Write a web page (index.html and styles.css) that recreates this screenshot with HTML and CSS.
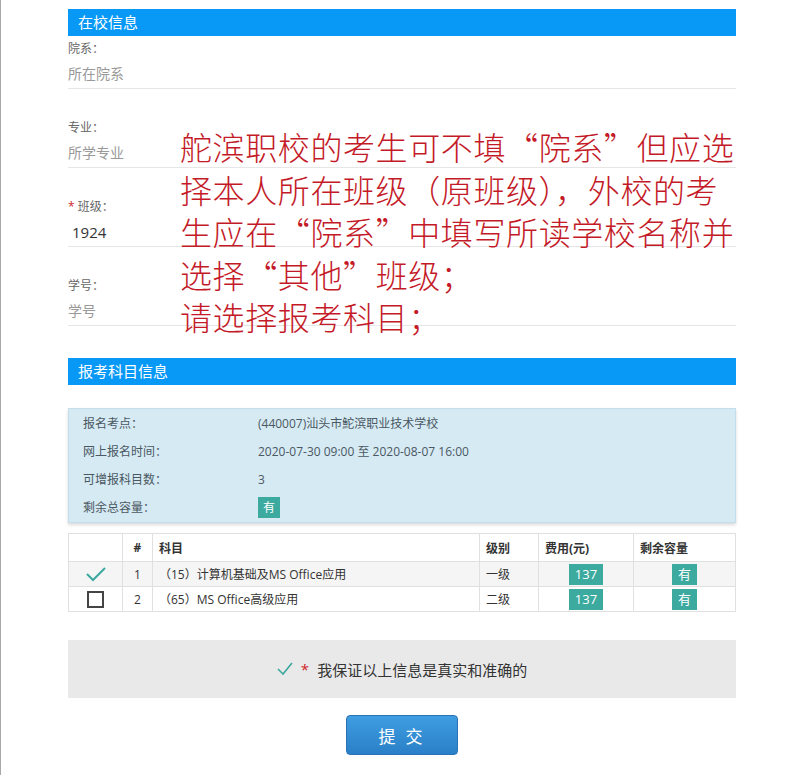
FILE: index.html
```html
<!DOCTYPE html>
<html lang="zh-CN">
<head>
  <meta charset="UTF-8">
  <title>报考信息</title>
  <link rel="stylesheet" href="styles.css">
</head>
<body>
  <div class="page">
    <div class="panel-title">在校信息</div>

    <div class="field">
      <div class="field-label">院系：</div>
      <div class="field-input placeholder">所在院系</div>
    </div>
    <div class="field">
      <div class="field-label">专业：</div>
      <div class="field-input placeholder">所学专业</div>
    </div>
    <div class="field">
      <div class="field-label"><span class="req">*</span> 班级：</div>
      <div class="field-input value">1924</div>
    </div>
    <div class="field">
      <div class="field-label">学号：</div>
      <div class="field-input placeholder">学号</div>
    </div>

    <div class="panel-title second">报考科目信息</div>

    <div class="info-box">
      <div class="info-row"><span class="info-label">报名考点：</span><span>(440007)汕头市鮀滨职业技术学校</span></div>
      <div class="info-row"><span class="info-label">网上报名时间：</span><span>2020-07-30 09:00 至 2020-08-07 16:00</span></div>
      <div class="info-row"><span class="info-label">可增报科目数：</span><span>3</span></div>
      <div class="info-row"><span class="info-label">剩余总容量：</span><span class="badge">有</span></div>
    </div>

    <table class="subjects">
      <thead>
        <tr>
          <th class="c-check"></th>
          <th class="c-num">#</th>
          <th class="c-name">科目</th>
          <th class="c-level">级别</th>
          <th class="c-fee">费用(元)</th>
          <th class="c-cap">剩余容量</th>
        </tr>
      </thead>
      <tbody>
        <tr class="striped">
          <td class="c-check">
            <svg width="20" height="15" viewBox="0 0 20 15"><polyline points="1,7 7,13 19,1" fill="none" stroke="#3ba99f" stroke-width="2"/></svg>
          </td>
          <td class="c-num">1</td>
          <td class="c-name">（15）计算机基础及MS Office应用</td>
          <td class="c-level">一级</td>
          <td class="c-fee"><span class="badge">137</span></td>
          <td class="c-cap"><span class="badge">有</span></td>
        </tr>
        <tr>
          <td class="c-check"><span class="box"></span></td>
          <td class="c-num">2</td>
          <td class="c-name">（65）MS Office高级应用</td>
          <td class="c-level">二级</td>
          <td class="c-fee"><span class="badge">137</span></td>
          <td class="c-cap"><span class="badge">有</span></td>
        </tr>
      </tbody>
    </table>

    <div class="confirm">
      <svg width="16" height="14" viewBox="0 0 16 14"><polyline points="1,7 6,12 15,1" fill="none" stroke="#3ba99f" stroke-width="1.6"/></svg>
      <span class="req">*</span>
      <span>我保证以上信息是真实和准确的</span>
    </div>

    <div class="actions">
      <button class="submit">提 交</button>
    </div>

    <div class="notice">
      舵滨职校的考生可不填<span class="q">“</span>院系<span class="q">”</span>但应选<br>
      择本人所在班级（原班级），外校的考<br>
      生应在<span class="q">“</span>院系<span class="q">”</span>中填写所读学校名称并<br>
      选择<span class="q">“</span>其他<span class="q">”</span>班级；<br>
      请选择报考科目；
    </div>
  </div>
</body>
</html>
```

FILE: styles.css
```css
body {
  margin: 0;
  background: #fff;
  font-family: "Open Sans", "Noto Sans CJK SC", sans-serif;
  color: #333;
}
.page {
  position: relative;
  border-left: 1px solid #a8a8a8;
  min-height: 775px;
  box-sizing: border-box;
  padding: 9px 0 0 67px;
  width: 736px;
}
.panel-title {
  background: #0898f6;
  color: #fff;
  font-size: 15px;
  height: 27px;
  line-height: 27px;
  padding-left: 10px;
}
.panel-title.second {
  margin-top: 32px;
}
.field {
  margin-top: 6px;
  margin-bottom: 32px;
}
.field + .field {
  margin-top: 0;
}
.field-label {
  font-size: 12px;
  line-height: 14px;
  color: #666;
}
.req {
  color: #d0262b;
}
.field-input {
  padding: 10px 0 6px 0;
  line-height: 16px;
  font-size: 14px;
  border-bottom: 1px solid #e6e6e6;
}
.placeholder {
  color: #999;
}
.value {
  color: #333;
  font-size: 15px;
  padding-left: 4px;
}
.info-box {
  margin-top: 23px;
  background: #d6eaf4;
  border: 1px solid #c4dfeb;
  box-shadow: 0 2px 3px rgba(0, 0, 0, 0.15);
  padding: 0 0 1px 14px;
  font-size: 12px;
  color: #4a5862;
}
.info-row {
  display: flex;
  align-items: center;
  height: 28px;
}
.info-label {
  width: 175px;
}
.badge {
  display: inline-block;
  background: #3caa9f;
  color: #fff;
  font-size: 12px;
  line-height: 21px;
  padding: 0 5px;
}
.subjects {
  margin-top: 10px;
  width: 100%;
  border-collapse: collapse;
  font-size: 12px;
  color: #333;
}
.subjects th, .subjects td {
  border: 1px solid #e0e0e0;
  padding: 0 6px;
  text-align: left;
}
.subjects th {
  height: 27px;
  font-weight: bold;
}
.subjects td {
  height: 24px;
}
.subjects tr.striped td {
  background: #f5f5f5;
}
.subjects .c-check {
  width: 41px;
  text-align: center;
}
.subjects .c-check svg {
  display: block;
  margin: 0 auto;
}
.subjects .c-num {
  width: 17px;
  text-align: center;
}
.subjects td.c-num {
  text-align: center;
}
.subjects .c-level {
  width: 46px;
}
.subjects .c-fee {
  width: 82px;
}
.subjects .c-cap {
  width: 89px;
}
.subjects td.c-fee, .subjects td.c-cap {
  text-align: center;
}
.subjects td .badge {
  padding: 0 6px;
  font-size: 13px;
}
.box {
  display: block;
  margin: 0 auto;
  width: 13px;
  height: 13px;
  border: 2px solid #444;
}
.confirm {
  margin-top: 28px;
  height: 58px;
  background: #e9e9e9;
  display: flex;
  align-items: center;
  justify-content: center;
  gap: 8px;
  font-size: 15px;
  color: #333;
}
.actions {
  display: flex;
  justify-content: center;
  margin-top: 17px;
}
.submit {
  width: 112px;
  height: 40px;
  border: 1px solid #2a72b5;
  border-radius: 4px;
  background: linear-gradient(#3f9de0, #2a80c8);
  color: #fff;
  font-size: 17px;
  font-family: "Noto Sans CJK SC", sans-serif;
  letter-spacing: 3px;
}
.notice {
  position: absolute;
  left: 179px;
  top: 125px;
  font-family: "Noto Sans CJK SC", serif;
  font-weight: 300;
  font-size: 32px;
  line-height: 42.5px;
  letter-spacing: 0.6px;
  color: #c41a28;
  white-space: nowrap;
}
.notice .q {
  font-feature-settings: "fwid";
}
```
